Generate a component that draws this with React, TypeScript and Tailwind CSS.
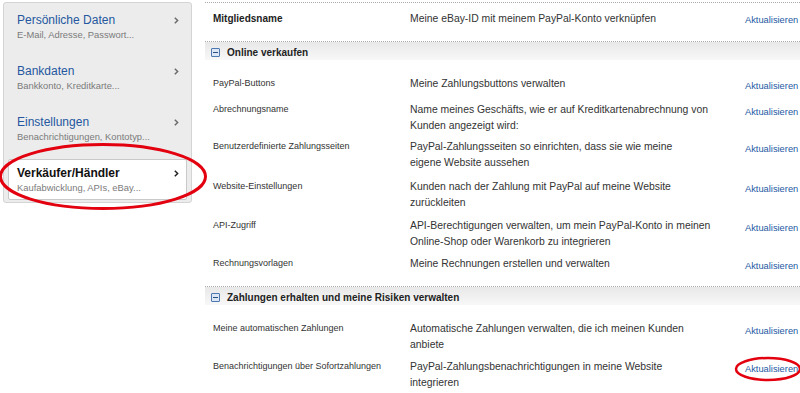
import React from 'react'

type NavItem = { title: string; sub: string; active?: boolean }

const navItems: NavItem[] = [
    { title: 'Persönliche Daten', sub: 'E-Mail, Adresse, Passwort...' },
    { title: 'Bankdaten', sub: 'Bankkonto, Kreditkarte...' },
    { title: 'Einstellungen', sub: 'Benachrichtigungen, Kontotyp...' },
    { title: 'Verkäufer/Händler', sub: 'Kaufabwicklung, APIs, eBay...', active: true },
]

type Row = { label: string; lines: string[]; h: string }

const onlineRows: Row[] = [
    { label: 'PayPal-Buttons', lines: ['Meine Zahlungsbuttons verwalten'], h: 'h-[26px]' },
    { label: 'Abrechnungsname', lines: ['Name meines Geschäfts, wie er auf Kreditkartenabrechnung von', 'Kunden angezeigt wird:'], h: 'h-[37px]' },
    { label: 'Benutzerdefinierte Zahlungsseiten', lines: ['PayPal-Zahlungsseiten so einrichten, dass sie wie meine', 'eigene Website aussehen'], h: 'h-[40px]' },
    { label: 'Website-Einstellungen', lines: ['Kunden nach der Zahlung mit PayPal auf meine Website', 'zurückleiten'], h: 'h-[39px]' },
    { label: 'API-Zugriff', lines: ['API-Berechtigungen verwalten, um mein PayPal-Konto in meinen', 'Online-Shop oder Warenkorb zu integrieren'], h: 'h-[38px]' },
    { label: 'Rechnungsvorlagen', lines: ['Meine Rechnungen erstellen und verwalten'], h: 'h-[30px]' },
]

const riskRows: Row[] = [
    { label: 'Meine automatischen Zahlungen', lines: ['Automatische Zahlungen verwalten, die ich meinen Kunden', 'anbiete'], h: 'h-[38px]' },
    { label: 'Benachrichtigungen über Sofortzahlungen', lines: ['PayPal-Zahlungsbenachrichtigungen in meine Website', 'integrieren'], h: 'h-[38px]' },
]

function Chevron({ dark }: { dark?: boolean }) {
    return (
        <svg width="5" height="7" viewBox="0 0 5 7" className="mt-[4px]">
            <polyline points="0.8,0.8 3.6,3.5 0.8,6.2" fill="none" stroke={dark ? '#222' : '#6b6b6b'} strokeWidth="1.5" />
        </svg>
    )
}

function Sidebar() {
    return (
        <div className="ml-[3px] mt-[2px] w-[189px] h-[201px] bg-[#ececec] border border-[#d4d4d4] rounded-[3px] px-[4px] pt-[3px] flex flex-col gap-[10px] shrink-0">
            {navItems.map((item) => (
                <div
                    key={item.title}
                    className={`h-[41px] pl-[8px] pr-[7px] pt-[6px] rounded-[2px] border ${item.active ? 'bg-white border-[#c9c9c9]' : 'border-transparent'}`}
                >
                    <div className="flex justify-between">
                        <span className={`text-[12px] leading-[15px] ${item.active ? 'font-bold text-[#111] text-[12.5px]' : 'text-[#24579f]'}`}>
                            {item.title}
                        </span>
                        <Chevron dark={item.active} />
                    </div>
                    <div className="mt-[1px] text-[9.4px] leading-[12px] text-[#7b7b7b]">{item.sub}</div>
                </div>
            ))}
        </div>
    )
}

function SectionHeader({ title }: { title: string }) {
    return (
        <div className="border-t border-dotted border-[#a9a9a9]">
            <div className="h-[18px] bg-linear-to-b from-[#e8e8e8] to-[#f8f8f8] flex items-center pl-[6px] pt-[3px] gap-[7px]">
                <span className="w-[9px] h-[9px] border border-[#4f77b0] bg-[#dce7f5] rounded-[1px] flex items-center justify-center">
                    <span className="w-[5px] h-[1px] bg-[#2b4f86]" />
                </span>
                <span className="text-[10px] font-bold text-[#222] leading-[12px]">{title}</span>
            </div>
        </div>
    )
}

function DataRow({ row }: { row: Row }) {
    return (
        <div className={`flex ${row.h}`}>
            <div className="w-[205px] pl-[8px] text-[9px] leading-[16px] text-[#333] -mt-[1px]">{row.label}</div>
            <div className="w-[335px] text-[10.4px] leading-[16px] text-[#333]">
                {row.lines.map((l) => (
                    <div key={l} className="whitespace-nowrap">{l}</div>
                ))}
            </div>
            <a className="pt-[2px] text-[9.3px] leading-[16px] text-[#2459a3] whitespace-nowrap">Aktualisieren</a>
        </div>
    )
}

export default function App() {
    return (
        <div className="relative w-[800px] h-[393px] overflow-hidden bg-white font-['Liberation_Sans',Arial,sans-serif]">
            <div className="flex">
                <Sidebar />

                <div className="ml-[13px] mt-[2px] flex-1 min-w-0">
                    {/*Mitgliedsname*/}
                    <div className="border-t border-dotted border-[#a9a9a9] h-[39px] pt-[8px] flex">
                        <div className="w-[205px] pl-[8px] text-[10px] font-bold leading-[16px] text-[#222]">Mitgliedsname</div>
                        <div className="w-[335px] text-[10.4px] leading-[16px] text-[#333] whitespace-nowrap">Meine eBay-ID mit meinem PayPal-Konto verknüpfen</div>
                        <a className="pt-[1px] text-[9.3px] leading-[16px] text-[#2459a3] whitespace-nowrap">Aktualisieren</a>
                    </div>

                    <SectionHeader title="Online verkaufen" />
                    <div className="pt-[16px]">
                        {onlineRows.map((r) => <DataRow key={r.label} row={r} />)}
                    </div>

                    <SectionHeader title="Zahlungen erhalten und meine Risiken verwalten" />
                    <div className="pt-[16px]">
                        {riskRows.map((r) => <DataRow key={r.label} row={r} />)}
                    </div>
                </div>
            </div>

            {/*red annotation marks*/}
            <svg className="absolute inset-0 pointer-events-none" width="800" height="393">
                <ellipse cx="103" cy="176.5" rx="102.5" ry="32" fill="none" stroke="#e3000f" strokeWidth="3" />
                <ellipse cx="768" cy="369" rx="32" ry="11" fill="none" stroke="#e3000f" strokeWidth="2.5" />
            </svg>
        </div>
    )
}
